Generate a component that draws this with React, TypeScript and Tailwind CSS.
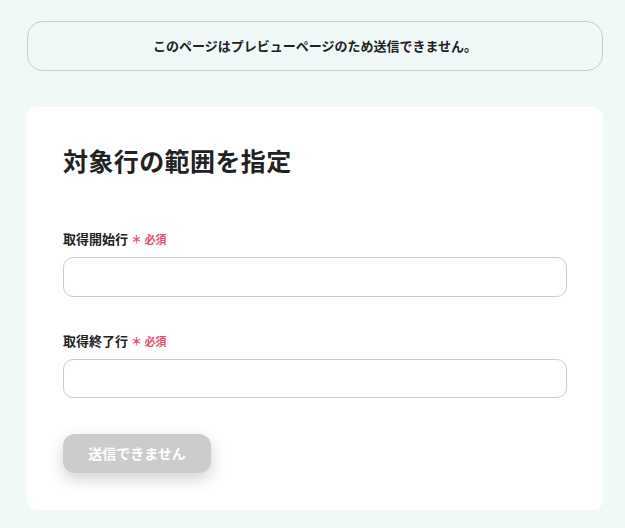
export default function App() {
  return (
    <div
      className="min-h-screen bg-[#f1f9f8] pl-[27px] pr-[22px] pt-[21px] pb-[18px] text-[#222]"
      style={{ fontFamily: '"Noto Sans CJK JP", "Noto Sans", sans-serif' }}
    >
      {/* Preview notice */}
      <div className="flex h-[50px] items-center justify-center rounded-[16px] border border-[#cccccc] text-[13px] font-bold">
        このページはプレビューページのため送信できません。
      </div>

      {/* Form card */}
      <div className="mt-[36px] rounded-[10px] bg-white px-9 pt-[36px] pb-[37px]">
        <h1 className="h-[34px] text-[25px] leading-[34px] font-bold tracking-[0.4px]">対象行の範囲を指定</h1>

        <div className="mt-[53px] flex flex-col">
          <label className="flex h-[18px] items-center gap-[3px] text-[13px] font-bold">
            取得開始行
            <span className="text-[11px] text-[#f2496b]">＊ 必須</span>
          </label>
          <input type="text" className="mt-[9px] h-[40px] w-full rounded-[10px] border border-[#cccccc] bg-white px-3 text-[14px] outline-none" />
        </div>

        <div className="mt-[35px] flex flex-col">
          <label className="flex h-[18px] items-center gap-[3px] text-[13px] font-bold">
            取得終了行
            <span className="text-[11px] text-[#f2496b]">＊ 必須</span>
          </label>
          <input type="text" className="mt-[9px] h-[39px] w-full rounded-[10px] border border-[#cccccc] bg-white px-3 text-[14px] outline-none" />
        </div>

        <button
          disabled
          className="mt-[36px] flex h-[39px] w-[148px] items-center justify-center rounded-[12px] bg-[#cccccc] text-[14px] font-bold text-white shadow-[0_6px_16px_rgba(0,0,0,0.18)]"
        >
          送信できません
        </button>
      </div>
    </div>
  )
}
